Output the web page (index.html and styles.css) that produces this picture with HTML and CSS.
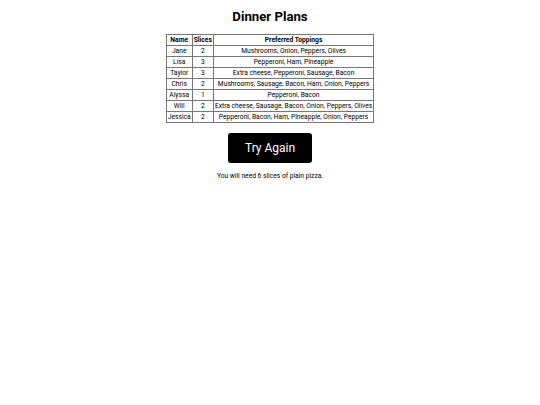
FILE: index.html
```html
<!DOCTYPE html>
<html>
<head>
<meta charset="utf-8">
<link rel="stylesheet" href="styles.css">
</head>
<body>
<div class="page">
  <h1 class="title">Dinner Plans</h1>
  <table class="plans">
    <thead>
      <tr><th>Name</th><th>Slices</th><th>Preferred Toppings</th></tr>
    </thead>
    <tbody>
      <tr><td>Jane</td><td>2</td><td>Mushrooms, Onion, Peppers, Olives</td></tr>
      <tr><td>Lisa</td><td>3</td><td>Pepperoni, Ham, Pineapple</td></tr>
      <tr><td>Taylor</td><td>3</td><td>Extra cheese, Pepperoni, Sausage, Bacon</td></tr>
      <tr><td>Chris</td><td>2</td><td>Mushrooms, Sausage, Bacon, Ham, Onion, Peppers</td></tr>
      <tr><td>Alyssa</td><td>1</td><td>Pepperoni, Bacon</td></tr>
      <tr><td>Will</td><td>2</td><td>Extra cheese, Sausage, Bacon, Onion, Peppers, Olives</td></tr>
      <tr><td>Jessica</td><td>2</td><td>Pepperoni, Bacon, Ham, Pineapple, Onion, Peppers</td></tr>
    </tbody>
  </table>
  <button class="retry">Try Again</button>
  <p class="result">You will need 6 slices of plain pizza.</p>
</div>
</body>
</html>
```
FILE: styles.css
```css
html, body {
  margin: 0;
  padding: 0;
  background: #fff;
}
body {
  font-family: Roboto, "Liberation Sans", sans-serif;
  color: #000;
}
.page {
  display: flex;
  flex-direction: column;
  align-items: center;
  padding-top: 8px;
}
.title {
  margin: 0;
  font-size: 13.2px;
  font-weight: 700;
  line-height: 17px;
}
.plans {
  margin-top: 9px;
  border-collapse: collapse;
  font-size: 6.7px;
}
.plans th, .plans td {
  border: 1px solid #777;
  padding: 0 1px;
  height: 10px;
  line-height: 10px;
  text-align: center;
  white-space: nowrap;
}
.plans th {
  font-weight: 700;
}
.retry {
  margin-top: 10px;
  width: 84px;
  height: 30px;
  background: #000;
  color: #fff;
  border: none;
  border-radius: 3px;
  font-family: Roboto, "Liberation Sans", sans-serif;
  font-size: 12px;
}
.result {
  margin: 9px 0 0;
  font-size: 6.7px;
  line-height: 8px;
}
```
